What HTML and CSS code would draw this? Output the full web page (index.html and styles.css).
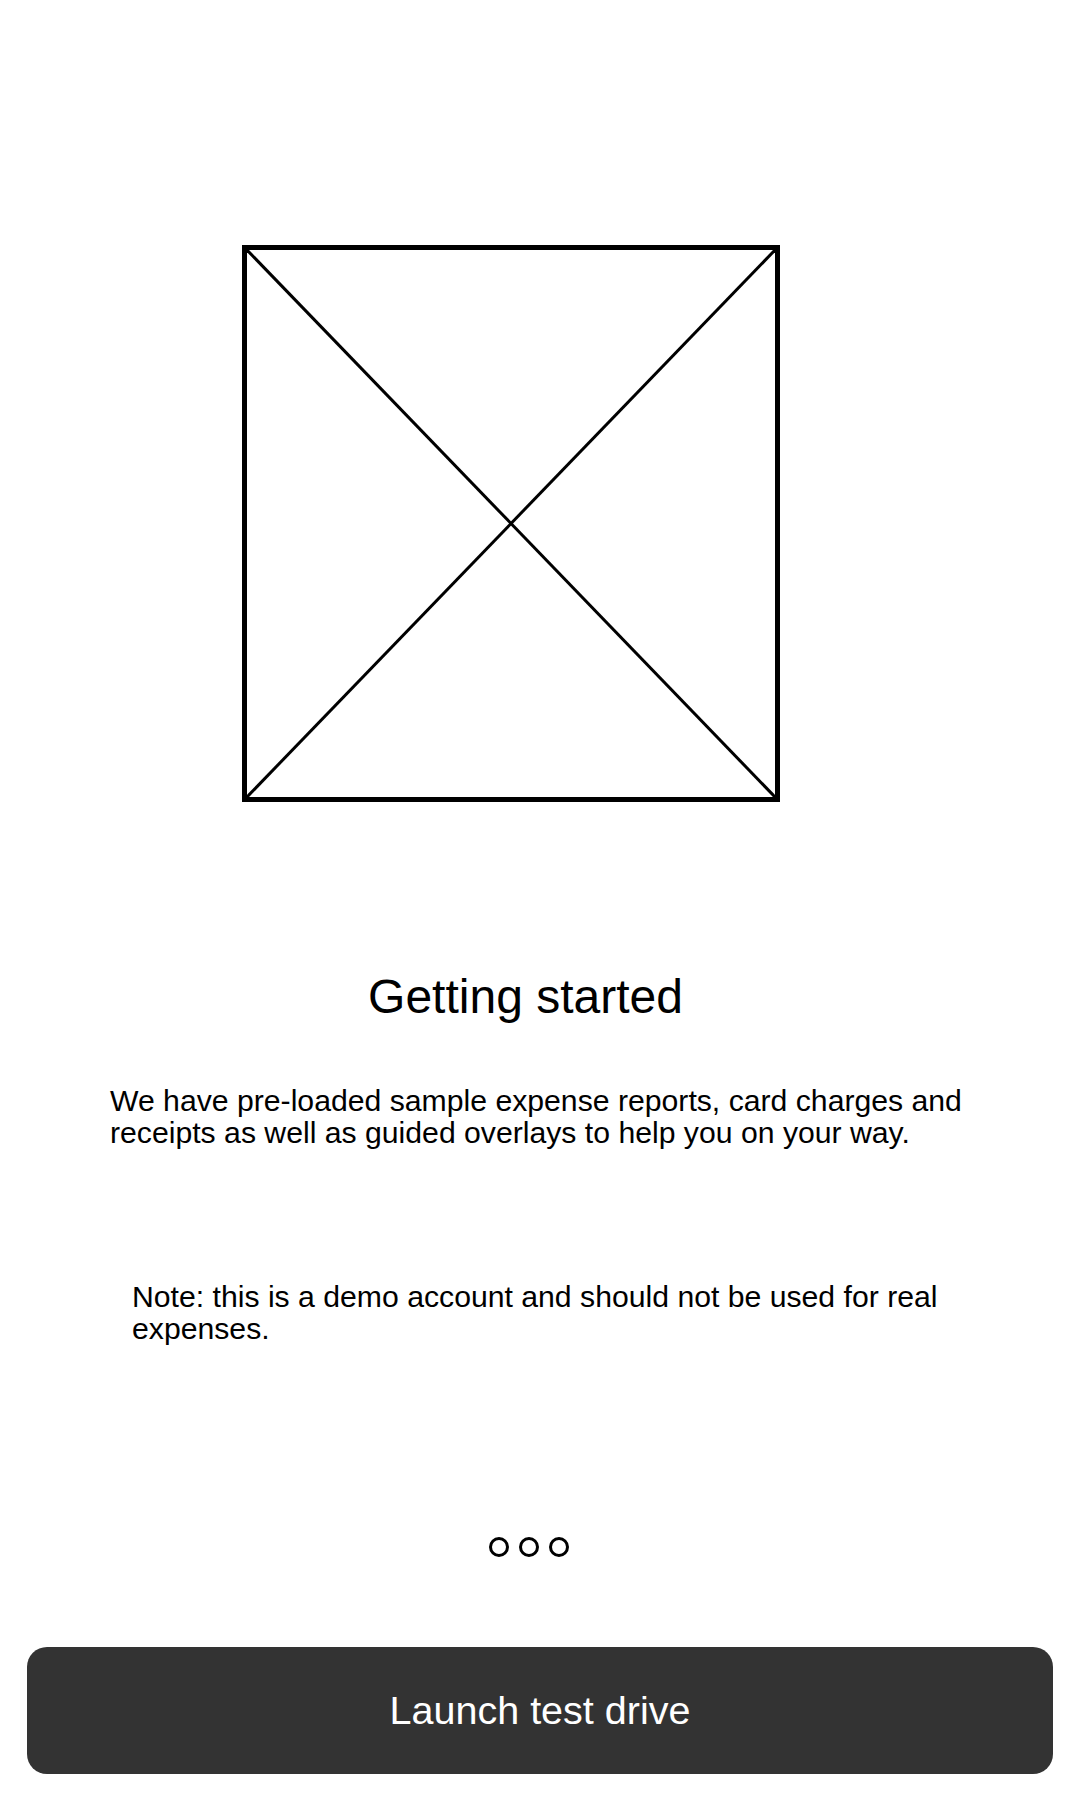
FILE: index.html
```html
<!DOCTYPE html>
<html lang="en">
<head>
<meta charset="utf-8">
<title>Getting started</title>
<link rel="stylesheet" href="styles.css">
</head>
<body>
<main class="screen">
  <div class="placeholder">
    <svg class="cross" viewBox="0 0 100 100" preserveAspectRatio="none" aria-hidden="true">
      <line x1="0" y1="0" x2="100" y2="100" vector-effect="non-scaling-stroke"/>
      <line x1="100" y1="0" x2="0" y2="100" vector-effect="non-scaling-stroke"/>
    </svg>
  </div>
  <h1 class="title">Getting started</h1>
  <p class="intro">We have pre-loaded sample expense reports, card charges and receipts as well as guided overlays to help you on your way.</p>
  <p class="note">Note: this is a demo account and should not be used for real expenses.</p>
  <div class="dots">
    <span class="dot"></span>
    <span class="dot"></span>
    <span class="dot"></span>
  </div>
  <button class="launch" type="button">Launch test drive</button>
</main>
</body>
</html>
```
FILE: styles.css
```css
* {
  box-sizing: border-box;
}

html, body {
  margin: 0;
  padding: 0;
  background: #ffffff;
}

body {
  font-family: "Liberation Sans", Arial, sans-serif;
  color: #000000;
}

.screen {
  width: 1080px;
  height: 1800px;
  display: flex;
  flex-direction: column;
  padding-top: 245px;
}

.placeholder {
  width: 538px;
  height: 557px;
  margin-left: 242px;
  border: 5px solid #000000;
}

.cross {
  display: block;
  width: 100%;
  height: 100%;
}

.cross line {
  stroke: #000000;
  stroke-width: 3;
}

.title {
  margin: 167px 29px 0 0;
  font-size: 48px;
  line-height: 55px;
  font-weight: normal;
  text-align: center;
}

.intro {
  margin: 61px 0 0 0;
  padding: 0 80px 0 110px;
  font-size: 30.2px;
  line-height: 32px;
}

.note {
  margin: 132px 0 0 0;
  padding: 0 80px 0 132px;
  font-size: 30.2px;
  line-height: 32px;
}

.dots {
  margin-top: 192px;
  display: flex;
  justify-content: center;
  gap: 10px;
  padding-right: 22px;
}

.dot {
  width: 20px;
  height: 20px;
  border: 3px solid #000000;
  border-radius: 50%;
}

.launch {
  flex: none;
  margin: 90px 27px 0 27px;
  height: 127px;
  border: none;
  border-radius: 20px;
  background: #333333;
  color: #ffffff;
  font-family: "Liberation Sans", Arial, sans-serif;
  font-size: 39.5px;
  cursor: pointer;
}
```
